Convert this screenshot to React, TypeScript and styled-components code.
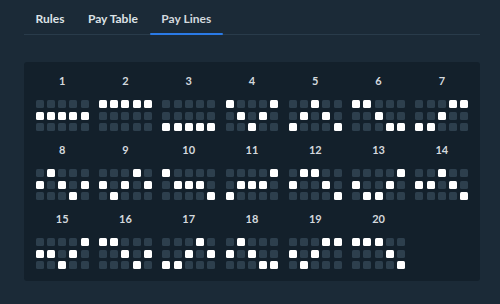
import React from 'react';
import styled, {createGlobalStyle} from "styled-components";

const GlobalStyle = createGlobalStyle`
  html, body {
    margin: 0;
    padding: 0;
    background: #1b2a37;
  }
  body {
    font-family: Lato, "Noto Sans", sans-serif;
  }
`

// each line: the row (0 top, 1 middle, 2 bottom) lit on each of the 5 reels
const PAY_LINES: number[][] = [
    [1, 1, 1, 1, 1],
    [0, 0, 0, 0, 0],
    [2, 2, 2, 2, 2],
    [0, 1, 2, 1, 0],
    [2, 1, 0, 1, 2],
    [0, 0, 1, 2, 2],
    [2, 2, 1, 0, 0],
    [1, 0, 1, 2, 1],
    [1, 2, 1, 0, 1],
    [0, 1, 1, 1, 2],
    [2, 1, 1, 1, 0],
    [1, 0, 0, 1, 2],
    [1, 2, 2, 1, 0],
    [1, 1, 0, 1, 2],
    [1, 1, 2, 1, 0],
    [0, 0, 1, 2, 1],
    [2, 2, 1, 0, 1],
    [1, 0, 1, 2, 2],
    [1, 2, 1, 0, 0],
    [0, 0, 0, 1, 2],
]

const TABS = ['Rules', 'Pay Table', 'Pay Lines']

const Page = styled.div`
  width: 500px;
  height: 304px;
  padding: 0 20px 0 24px;
  box-sizing: border-box;
  background: #1b2a37;
`

const TabBar = styled.div`
  display: flex;
  height: 34px;
  border-bottom: 1px solid #293b4a;
`

const Tab = styled.div<{ active?: boolean }>`
  position: relative;
  padding: 12px 12px 0 11.5px;
  font-size: 12px;
  font-weight: 700;
  line-height: 14px;
  color: ${({active}) => active ? '#d3d9de' : '#dde2e6'};

  &::after {
    content: '';
    display: ${({active}) => active ? 'block' : 'none'};
    position: absolute;
    left: 0;
    right: 0;
    bottom: -1px;
    height: 2px;
    border-radius: 1px;
    background: #2a7ae6;
  }
`

const Panel = styled.div`
  margin-top: 27px;
  padding: 12px 6.5px;
  background: #13202b;
  border-radius: 3px;
  display: grid;
  grid-template-columns: repeat(7, 1fr);
  row-gap: 12px;
`

const Line = styled.div`
  display: flex;
  flex-direction: column;
  align-items: center;
`

const Number = styled.div`
  font-size: 11px;
  font-weight: 700;
  line-height: 14px;
  color: #d4d9de;
  margin-bottom: 12px;
`

const Reels = styled.div`
  display: grid;
  grid-template-columns: repeat(5, 8px);
  grid-template-rows: repeat(3, 8px);
  column-gap: 3.2px;
  row-gap: 3.5px;
`

const Cell = styled.div<{ lit?: boolean }>`
  width: 8px;
  height: 8px;
  border-radius: 1.5px;
  background: ${({lit}) => lit ? '#ffffff' : '#2d3f4d'};
`

function PayLine({index, rows}: { index: number, rows: number[] }) {
    const cells = []
    for (let r = 0; r < 3; r++) {
        for (let c = 0; c < 5; c++) {
            cells.push(<Cell key={`${r}-${c}`} lit={rows[c] === r}/>)
        }
    }
    return (
        <Line>
            <Number>{index}</Number>
            <Reels>{cells}</Reels>
        </Line>
    )
}

export default function App() {
    return (
        <>
            <GlobalStyle/>
            <Page>
                <TabBar>
                    {TABS.map(t => <Tab key={t} active={t === 'Pay Lines'}>{t}</Tab>)}
                </TabBar>
                <Panel>
                    {PAY_LINES.map((rows, i) => <PayLine key={i} index={i + 1} rows={rows}/>)}
                </Panel>
            </Page>
        </>
    );
}
